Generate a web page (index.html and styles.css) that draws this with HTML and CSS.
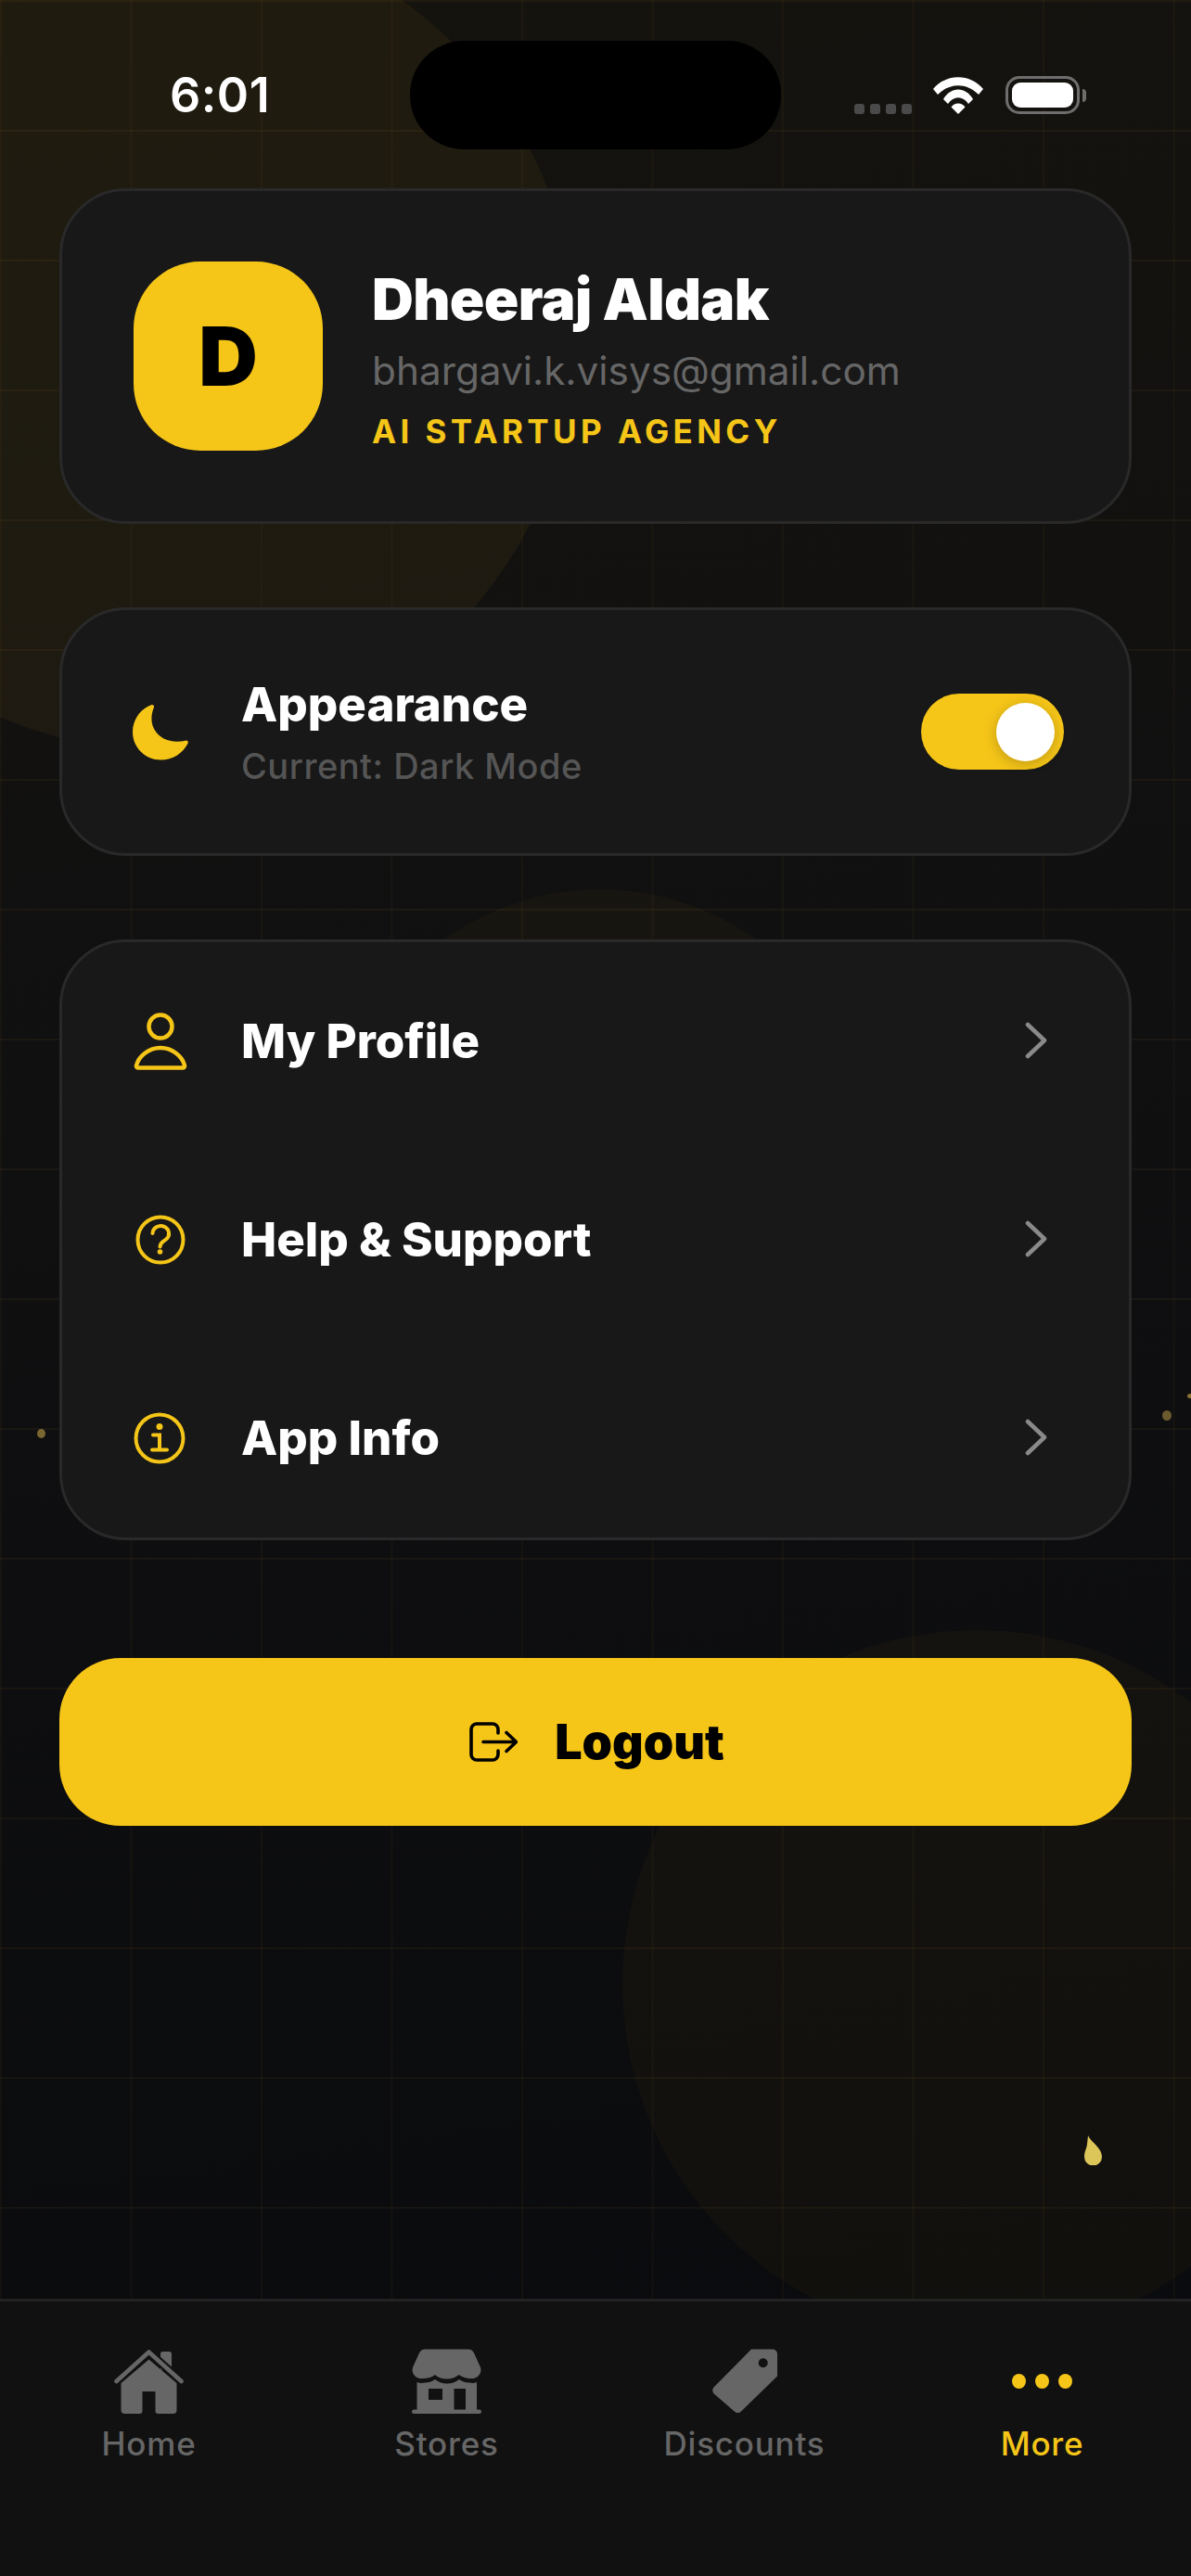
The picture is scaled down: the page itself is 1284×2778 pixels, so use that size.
FILE: index.html
```html
<!DOCTYPE html>
<html>
<head>
  <meta charset="utf-8">
  <title>More</title>
  <link rel="stylesheet" href="styles.css">
</head>
<body>
  <div class="phone">
    <div class="backdrop">
      <div class="blob blob-top"></div>
      <div class="blob blob-mid"></div>
      <div class="blob blob-low"></div>
      <div class="spark spark-a"></div>
      <div class="spark spark-b"></div>
      <div class="spark spark-c"></div>
      <div class="drop"></div>
    </div>

    <div class="status">
      <div class="time">6:01</div>
      <div class="island"></div>
      <div class="status-icons">
        <div class="signal"><i></i><i></i><i></i><i></i></div>
        <svg class="wifi" viewBox="0 0 54 40" fill="#fff">
          <path d="M0 13C14-4 40-4 54 13L49 19C36 6 18 6 5 19Z"/>
          <path d="M11 24C19 10 35 10 43 24L38 29C32 20 22 20 16 29Z"/>
          <path d="M19.5 32.5C23 27 31 27 34.5 32.5L27 40Z"/>
        </svg>
        <div class="battery"><div class="battery-fill"></div></div>
        <div class="battery-cap"></div>
      </div>
    </div>

    <div class="main">
      <div class="card profile">
        <div class="avatar">D</div>
        <div class="who">
          <div class="name">Dheeraj Aldak</div>
          <div class="email">bhargavi.k.visys@gmail.com</div>
          <div class="tag">AI STARTUP AGENCY</div>
        </div>
      </div>

      <div class="card appearance">
        <svg class="icon moon" viewBox="0 0 61 62" fill="#f5c518">
          <path d="M21 1C22.5.6 24 2.2 23.2 4.2C19.5 13 19.5 24 26.5 32C33 39.5 44 43.5 58 40.3C60 40 61.5 41.5 60.5 43.5C55 54.5 44 61.5 31 61.5C14 61.5 0 48 0 31C0 17 9 5 21 1Z"/>
        </svg>
        <div class="appearance-text">
          <div class="row-title">Appearance</div>
          <div class="row-sub">Current: Dark Mode</div>
        </div>
        <div class="toggle"><div class="knob"></div></div>
      </div>

      <div class="card menu">
        <div class="row">
          <svg class="icon person" viewBox="0 0 60 64" fill="none" stroke="#f5c518" stroke-width="4.5">
            <circle cx="30" cy="16" r="12.5"/>
            <path d="M6 60.5H54a2 2 0 0 0 2-2.5C53.5 48 42.5 39 30 39C17.5 39 6.5 48 4 58a2 2 0 0 0 2 2.5Z"/>
          </svg>
          <div class="row-title">My Profile</div>
          <svg class="chev" viewBox="0 0 24 40" fill="none" stroke="#8a8a8a" stroke-width="4.5" stroke-linecap="round" stroke-linejoin="round"><path d="M3 3L21 20L3 37"/></svg>
        </div>
        <div class="row">
          <svg class="icon" viewBox="0 0 60 60" fill="none" stroke="#f5c518" stroke-width="4" stroke-linecap="round">
            <circle cx="30" cy="30" r="24.5"/>
            <path d="M21.5 23a8.8 8.2 0 1 1 14.5 6.5c-3 2.5-6.5 3.5-6.5 8"/>
            <circle cx="29.5" cy="43" r="2.8" fill="#f5c518" stroke="none"/>
          </svg>
          <div class="row-title">Help &amp; Support</div>
          <svg class="chev" viewBox="0 0 24 40" fill="none" stroke="#8a8a8a" stroke-width="4.5" stroke-linecap="round" stroke-linejoin="round"><path d="M3 3L21 20L3 37"/></svg>
        </div>
        <div class="row">
          <svg class="icon" viewBox="0 0 60 60" fill="none" stroke="#f5c518" stroke-width="4" stroke-linecap="round">
            <circle cx="29" cy="30" r="25.5"/>
            <path d="M22 26.5H29V42.5M21 42.5H37"/>
            <circle cx="29" cy="17.5" r="3.5" fill="#f5c518" stroke="none"/>
          </svg>
          <div class="row-title">App Info</div>
          <svg class="chev" viewBox="0 0 24 40" fill="none" stroke="#8a8a8a" stroke-width="4.5" stroke-linecap="round" stroke-linejoin="round"><path d="M3 3L21 20L3 37"/></svg>
        </div>
      </div>

      <div class="logout">
        <svg class="logout-icon" viewBox="0 0 52 44" fill="none" stroke="#000" stroke-width="3.6" stroke-linecap="round" stroke-linejoin="round">
          <path d="M31 12V8a6 6 0 0 0-6-6H8a6 6 0 0 0-6 6V35a6 6 0 0 0 6 6H25a6 6 0 0 0 6-6V31"/>
          <path d="M15 21.5H50M40 11.5L50.5 21.5L40 31.5"/>
        </svg>
        <span>Logout</span>
      </div>
    </div>

    <div class="tabs">
      <div class="tab">
        <svg class="tab-icon" viewBox="0 0 75 70" fill="#666">
          <rect x="50" y="3" width="12" height="20" rx="2.5"/>
          <path d="M37.5 11.5L67.5 37V66a4 4 0 0 1-4 4H47.5a3 3 0 0 1-3-3V46H30.5V67a3 3 0 0 1-3 3H11.5a4 4 0 0 1-4-4V37Z"/>
          <path d="M2.5 35L37.5 3.5L72.5 35" fill="none" stroke="#111" stroke-width="9"/>
          <path d="M2.5 35L37.5 3.5L72.5 35" fill="none" stroke="#666" stroke-width="4.6" stroke-linecap="round" stroke-linejoin="round"/>
        </svg>
        <div class="tab-label">Home</div>
      </div>
      <div class="tab">
        <svg class="tab-icon" viewBox="0 0 75 70" fill="#666">
          <path d="M14 .5H61Q65 .5 67 4.5L74 20C76 26 71 33 63 32C58 32 53 29.5 50.5 28C47 31 42 32.5 38 32.5C33 32.5 28 31 25 28C22 30.5 17 32 12 32C4 33-1 26 1 20L8 4.5Q10 .5 14 .5Z"/>
          <path fill-rule="evenodd" d="M5.5 36Q10 37.5 14 36.5Q20 36.5 25 33Q31 37.5 38 37.5Q45 37.5 51 33Q56 36.5 62 36.5Q66 37.5 70 36V66H5.5ZM18 43H33V55H18ZM45.5 43H58V66H45.5Z"/>
          <rect x="0" y="65.5" width="75" height="4.5" rx="2.2"/>
        </svg>
        <div class="tab-label">Stores</div>
      </div>
      <div class="tab">
        <svg class="tab-icon" viewBox="0 0 70 70" fill="#666">
          <path fill-rule="evenodd" d="M42 .5H65a5 5 0 0 1 5 5V29.5L31 67.5a5 5 0 0 1-7 .3L1.8 48.5a5 5 0 0 1-.3-7ZM59.7 15.3a5 5 0 1 0-10 0a5 5 0 1 0 10 0Z"/>
        </svg>
        <div class="tab-label">Discounts</div>
      </div>
      <div class="tab active">
        <div class="tab-icon dots"><i></i><i></i><i></i></div>
        <div class="tab-label">More</div>
      </div>
    </div>
  </div>
</body>
</html>
```

FILE: styles.css
```css
html, body {
  margin: 0;
  background: #0a0a0d;
}
body {
  width: 1284px;
  height: 2778px;
  overflow: hidden;
  font-family: Inter, "Liberation Sans", sans-serif;
}
.phone {
  position: relative;
  width: 1284px;
  height: 2778px;
  display: flex;
  flex-direction: column;
  overflow: hidden;
  background: linear-gradient(172deg, #15130e 0%, #101011 42%, #090a0d 100%);
}

/* decoration behind everything */
.backdrop {
  position: absolute;
  inset: 0;
  background-image:
    linear-gradient(rgba(245, 175, 50, 0.05) 2px, transparent 2px),
    linear-gradient(90deg, rgba(245, 175, 50, 0.035) 2px, transparent 2px);
  background-size: 140.5px 140px;
}
.blob {
  position: absolute;
  border-radius: 50%;
}
.blob-top {
  left: -272px;
  top: -83px;
  width: 892px;
  height: 892px;
  background: rgba(245, 180, 40, 0.055);
}
.blob-mid {
  left: 359px;
  top: 959px;
  width: 576px;
  height: 576px;
  background: rgba(245, 180, 40, 0.03);
}
.blob-low {
  left: 671px;
  top: 1758px;
  width: 764px;
  height: 764px;
  background: rgba(245, 180, 40, 0.033);
}
.spark {
  position: absolute;
  border-radius: 50%;
  background: #7a6630;
}
.spark-a { left: 40px; top: 1541px; width: 9px; height: 10px; }
.spark-b { left: 1253px; top: 1521px; width: 10px; height: 11px; background: #6b5a2e; }
.spark-c { left: 1280px; top: 1503px; width: 6px; height: 5px; background: #8a7230; }
.drop {
  position: absolute;
  left: 1169px;
  top: 2303px;
  width: 19px;
  height: 32px;
  background: #dcc65a;
  clip-path: path("M4 0C6 6 19 13 19 23A9.5 9.5 0 0 1 0 23C0 17 3 13 3 9Z");
  filter: blur(0.6px);
}

/* status bar */
.status {
  position: relative;
  height: 203px;
  flex: none;
  display: flex;
  padding: 44px 113px 0 183px;
  box-sizing: border-box;
}
.time {
  width: 108px;
  margin: 31px 151px 0 0;
  font-size: 52px;
  line-height: 56px;
  font-weight: 600;
  color: #fff;
  letter-spacing: 0.5px;
}
.island {
  width: 400px;
  height: 117px;
  border-radius: 58px;
  background: #000;
}
.status-icons {
  height: 41px;
  margin: 38px 0 0 auto;
  display: flex;
  align-items: flex-start;
}
.signal {
  display: flex;
  gap: 6px;
  margin: 30px 23px 0 0;
}
.signal i {
  width: 11px;
  height: 11px;
  border-radius: 3px;
  background: #4a4a4a;
}
.wifi {
  width: 54px;
  height: 40px;
  margin: 1px 24px 0 0;
}
.battery {
  width: 80px;
  height: 41px;
  box-sizing: border-box;
  border: 3px solid #6e6e6e;
  border-radius: 15px;
  padding: 4px;
}
.battery-fill {
  height: 100%;
  border-radius: 9px;
  background: #fff;
}
.battery-cap {
  width: 4px;
  height: 14px;
  margin: 14px 0 0 3px;
  border-radius: 0 7px 7px 0;
  background: #6e6e6e;
}

/* cards */
.main {
  position: relative;
  flex: 1;
  display: flex;
  flex-direction: column;
  gap: 90px;
  padding: 0 64px;
}
.card {
  box-sizing: border-box;
  border: 3px solid #292929;
  border-radius: 72px;
  background: #181818;
}
.profile {
  height: 362px;
  display: flex;
  align-items: center;
  gap: 53px;
  padding-left: 77px;
}
.avatar {
  width: 204px;
  height: 204px;
  border-radius: 72px;
  background: #f5c518;
  color: #000;
  font-size: 88px;
  font-weight: 900;
  display: flex;
  align-items: center;
  justify-content: center;
}
.who {
  display: flex;
  flex-direction: column;
  padding-top: 6px;
}
.name {
  font-size: 62px;
  line-height: 72px;
  font-weight: 900;
  color: #fff;
  letter-spacing: -0.6px;
}
.email {
  margin-top: 16px;
  font-size: 42.3px;
  line-height: 50px;
  color: #666;
}
.tag {
  margin-top: 18px;
  font-size: 35px;
  line-height: 44px;
  font-weight: 700;
  color: #f5c518;
  letter-spacing: 4.4px;
}
.appearance {
  height: 268px;
  display: flex;
  align-items: center;
  padding: 0 70px 0 76px;
}
.icon {
  width: 60px;
  height: 60px;
  flex: none;
  margin-right: 57px;
}
.moon {
  height: 61px;
}
.person {
  height: 64px;
}
.appearance-text {
  flex: 1;
}
.row-title {
  flex: 1;
  font-size: 51px;
  line-height: 58px;
  font-weight: 800;
  color: #fff;
}
.row-sub {
  margin-top: 15px;
  font-size: 38px;
  line-height: 44px;
  font-weight: 500;
  color: #555;
  letter-spacing: 0.5px;
}
.toggle {
  width: 154px;
  height: 82px;
  box-sizing: border-box;
  padding: 10px;
  display: flex;
  justify-content: flex-end;
  border-radius: 41px;
  background: #f5c518;
}
.knob {
  width: 63px;
  height: 63px;
  border-radius: 50%;
  background: #fff;
  box-shadow: 0 3px 14px rgba(0, 0, 0, 0.22);
}
.menu {
  display: flex;
  flex-direction: column;
}
.row {
  height: 214px;
  display: flex;
  align-items: center;
  padding: 0 88px 0 76px;
}
.chev {
  width: 24px;
  height: 40px;
  margin-top: -2px;
}

/* logout */
.logout {
  height: 181px;
  margin-top: 37px;
  box-sizing: border-box;
  padding-left: 3px;
  border-radius: 66px;
  background: #f5c518;
  display: flex;
  align-items: center;
  justify-content: center;
  gap: 40px;
  font-size: 52px;
  font-weight: 900;
  color: #000;
}
.logout-icon {
  width: 52px;
  height: 44px;
}

/* tab bar */
.tabs {
  position: relative;
  height: 299px;
  flex: none;
  box-sizing: border-box;
  border-top: 3px solid #222;
  background: #111;
  display: flex;
  padding-top: 51px;
}
.tab {
  flex: 1;
  display: flex;
  flex-direction: column;
  align-items: center;
}
.tab-icon {
  height: 70px;
}
.tab-label {
  margin-top: 10px;
  font-size: 35px;
  line-height: 44px;
  font-weight: 500;
  color: #666;
  letter-spacing: 0.8px;
}
.tab.active .tab-label {
  color: #f5c518;
}
.dots {
  display: flex;
  align-items: center;
  gap: 10px;
}
.dots i {
  width: 15px;
  height: 16px;
  border-radius: 50%;
  background: #f5c518;
}
```
